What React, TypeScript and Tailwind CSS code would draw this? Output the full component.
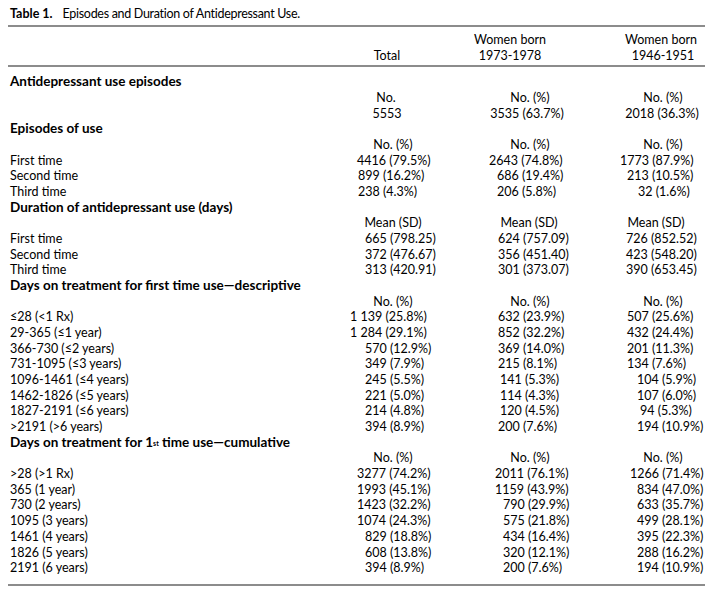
import React from 'react';

type Cell = { t: React.ReactNode; c: string };
type Row = { label: React.ReactNode; bold?: boolean; cells?: Cell[] };

const c = (t: React.ReactNode, cls: string): Cell => ({ t, c: cls });

// sub-header cells, centred on the column head
const NO_PCT = [
  c('No. (%)', 'w-[96px] justify-center'),
  c('No. (%)', 'w-[110px] justify-center'),
  c('No. (%)', 'w-[106px] justify-center'),
];

const MEAN_SD = [
  c('Mean (SD)', 'w-[96px] justify-center'),
  c('Mean (SD)', 'w-[108px] justify-center'),
  c('Mean (SD)', 'w-[92px] justify-center'),
];

const rows: Row[] = [
  { label: 'Antidepressant use episodes', bold: true },
  {
    label: '',
    cells: [
      c('No.', 'w-[82px] justify-center'),
      c('No. (%)', 'w-[110px] justify-center'),
      c('No. (%)', 'w-[106px] justify-center'),
    ],
  },
  {
    label: '',
    cells: [
      c('5553', 'w-[84px] justify-center'),
      c('3535 (63.7%)', 'w-[104px] justify-center'),
      c('2018 (36.3%)', 'w-[104px] justify-center'),
    ],
  },
  { label: 'Episodes of use', bold: true },
  { label: '', cells: NO_PCT },
  { label: 'First time', cells: [c('4416 (79.5%)', 'pl-[12px]'), c('2643 (74.8%)', 'pl-[14px]'), c('1773 (87.9%)', 'pl-[10px]')] },
  { label: 'Second time', cells: [c('899 (16.2%)', 'pl-[13px]'), c('686 (19.4%)', 'pl-[22px]'), c('213 (10.5%)', 'pl-[17px]')] },
  { label: 'Third time', cells: [c('238 (4.3%)', 'pl-[13px]'), c('206 (5.8%)', 'pl-[22px]'), c('32 (1.6%)', 'pl-[28px]')] },
  { label: 'Duration of antidepressant use (days)', bold: true },
  { label: '', cells: MEAN_SD },
  { label: 'First time', cells: [c('665 (798.25)', 'pl-[20px]'), c('624 (757.09)', 'pl-[23px]'), c('726 (852.52)', 'pl-[16px]')] },
  { label: 'Second time', cells: [c('372 (476.67)', 'pl-[20px]'), c('356 (451.40)', 'pl-[23px]'), c('423 (548.20)', 'pl-[16px]')] },
  { label: 'Third time', cells: [c('313 (420.91)', 'pl-[20px]'), c('301 (373.07)', 'pl-[23px]'), c('390 (653.45)', 'pl-[16px]')] },
  { label: 'Days on treatment for first time use\u2014descriptive', bold: true },
  { label: '', cells: NO_PCT },
  { label: '\u226428 (<1 Rx)', cells: [c('1 139 (25.8%)', 'pl-[5px]'), c('632 (23.9%)', 'pl-[23px]'), c('507 (25.6%)', 'pl-[17px]')] },
  { label: '29-365 (\u22641 year)', cells: [c('1 284 (29.1%)', 'pl-[5px]'), c('852 (32.2%)', 'pl-[23px]'), c('432 (24.4%)', 'pl-[17px]')] },
  { label: '366-730 (\u22642 years)', cells: [c('570 (12.9%)', 'pl-[20px]'), c('369 (14.0%)', 'pl-[23px]'), c('201 (11.3%)', 'pl-[17px]')] },
  { label: '731-1095 (\u22643 years)', cells: [c('349 (7.9%)', 'pl-[20px]'), c('215 (8.1%)', 'pl-[23px]'), c('134 (7.6%)', 'pl-[17px]')] },
  { label: '1096-1461 (\u22644 years)', cells: [c('245 (5.5%)', 'pl-[20px]'), c('141 (5.3%)', 'pl-[25px]'), c('104 (5.9%)', 'pl-[27px]')] },
  { label: '1462-1826 (\u22645 years)', cells: [c('221 (5.0%)', 'pl-[20px]'), c('114 (4.3%)', 'pl-[25px]'), c('107 (6.0%)', 'pl-[27px]')] },
  { label: '1827-2191 (\u22646 years)', cells: [c('214 (4.8%)', 'pl-[20px]'), c('120 (4.5%)', 'pl-[25px]'), c('94 (5.3%)', 'pl-[30px]')] },
  { label: '>2191 (>6 years)', cells: [c('394 (8.9%)', 'pl-[20px]'), c('200 (7.6%)', 'pl-[23px]'), c('194 (10.9%)', 'pl-[27px]')] },
  {
    label: (
      <>
        Days on treatment for 1<sup className="text-[7px] relative -top-[1px]">st</sup> time use{'\u2014'}cumulative
      </>
    ),
    bold: true,
  },
  { label: '', cells: NO_PCT },
  { label: '>28 (>1 Rx)', cells: [c('3277 (74.2%)', 'pl-[12px]'), c('2011 (76.1%)', 'pl-[20px]'), c('1266 (71.4%)', 'pl-[20px]')] },
  { label: '365 (1 year)', cells: [c('1993 (45.1%)', 'pl-[12px]'), c('1159 (43.9%)', 'pl-[20px]'), c('834 (47.0%)', 'pl-[27px]')] },
  { label: '730 (2 years)', cells: [c('1423 (32.2%)', 'pl-[12px]'), c('790 (29.9%)', 'pl-[28px]'), c('633 (35.7%)', 'pl-[27px]')] },
  { label: '1095 (3 years)', cells: [c('1074 (24.3%)', 'pl-[12px]'), c('575 (21.8%)', 'pl-[28px]'), c('499 (28.1%)', 'pl-[27px]')] },
  { label: '1461 (4 years)', cells: [c('829 (18.8%)', 'pl-[20px]'), c('434 (16.4%)', 'pl-[28px]'), c('395 (22.3%)', 'pl-[27px]')] },
  { label: '1826 (5 years)', cells: [c('608 (13.8%)', 'pl-[20px]'), c('320 (12.1%)', 'pl-[28px]'), c('288 (16.2%)', 'pl-[27px]')] },
  { label: '2191 (6 years)', cells: [c('394 (8.9%)', 'pl-[20px]'), c('200 (7.6%)', 'pl-[28px]'), c('194 (10.9%)', 'pl-[27px]')] },
];

const COL_W = ['w-[130px]', 'w-[135px]', 'w-[95px]'];

const TableRow = ({ row }: { row: Row }) => (
  <div className="flex h-[15.68px] items-center whitespace-nowrap">
    <div className={row.bold ? 'w-[337px] pl-[2px] font-bold text-[13.5px]' : 'w-[337px] pl-[2px]'}>{row.label}</div>
    {row.cells?.map((cell, i) => (
      <div key={i} className={COL_W[i]}>
        <div className={'flex ' + cell.c}>{cell.t}</div>
      </div>
    ))}
  </div>
);

const Rule = () => <div className="h-[2px] bg-[#8c8c8c]" />;

export default function App() {
  return (
    <div
      className="w-[713px] h-[594px] bg-white text-black text-[12.5px] leading-[15.68px] px-[8px]"
      style={{ fontFamily: 'Lato, "Open Sans", sans-serif' }}
    >
      <div className="h-[25px] pt-[6px] pl-[2px] whitespace-nowrap">
        <span className="font-bold">Table 1.</span>
        <span className="ml-[10px] tracking-[-0.3px]">Episodes and Duration of Antidepressant Use.</span>
      </div>
      <Rule />
      <div className="pt-[5px] pb-[2px]">
        <div className="flex h-[15.68px] items-center whitespace-nowrap">
          <div className="w-[337px]" />
          <div className="w-[130px]" />
          <div className="w-[135px]">
            <div className="flex w-[70px] justify-center">Women born</div>
          </div>
          <div className="w-[95px]">
            <div className="flex w-[102px] justify-center">Women born</div>
          </div>
        </div>
        <div className="flex h-[15.68px] items-center whitespace-nowrap">
          <div className="w-[337px]" />
          <div className="w-[130px]">
            <div className="flex w-[84px] justify-center">Total</div>
          </div>
          <div className="w-[135px]">
            <div className="flex w-[70px] justify-center">1973-1978</div>
          </div>
          <div className="w-[95px]">
            <div className="flex w-[106px] justify-center">1946-1951</div>
          </div>
        </div>
      </div>
      <Rule />
      <div className="pt-[7px] pb-[8px]">
        {rows.map((row, i) => (
          <TableRow key={i} row={row} />
        ))}
      </div>
      <Rule />
    </div>
  );
}
